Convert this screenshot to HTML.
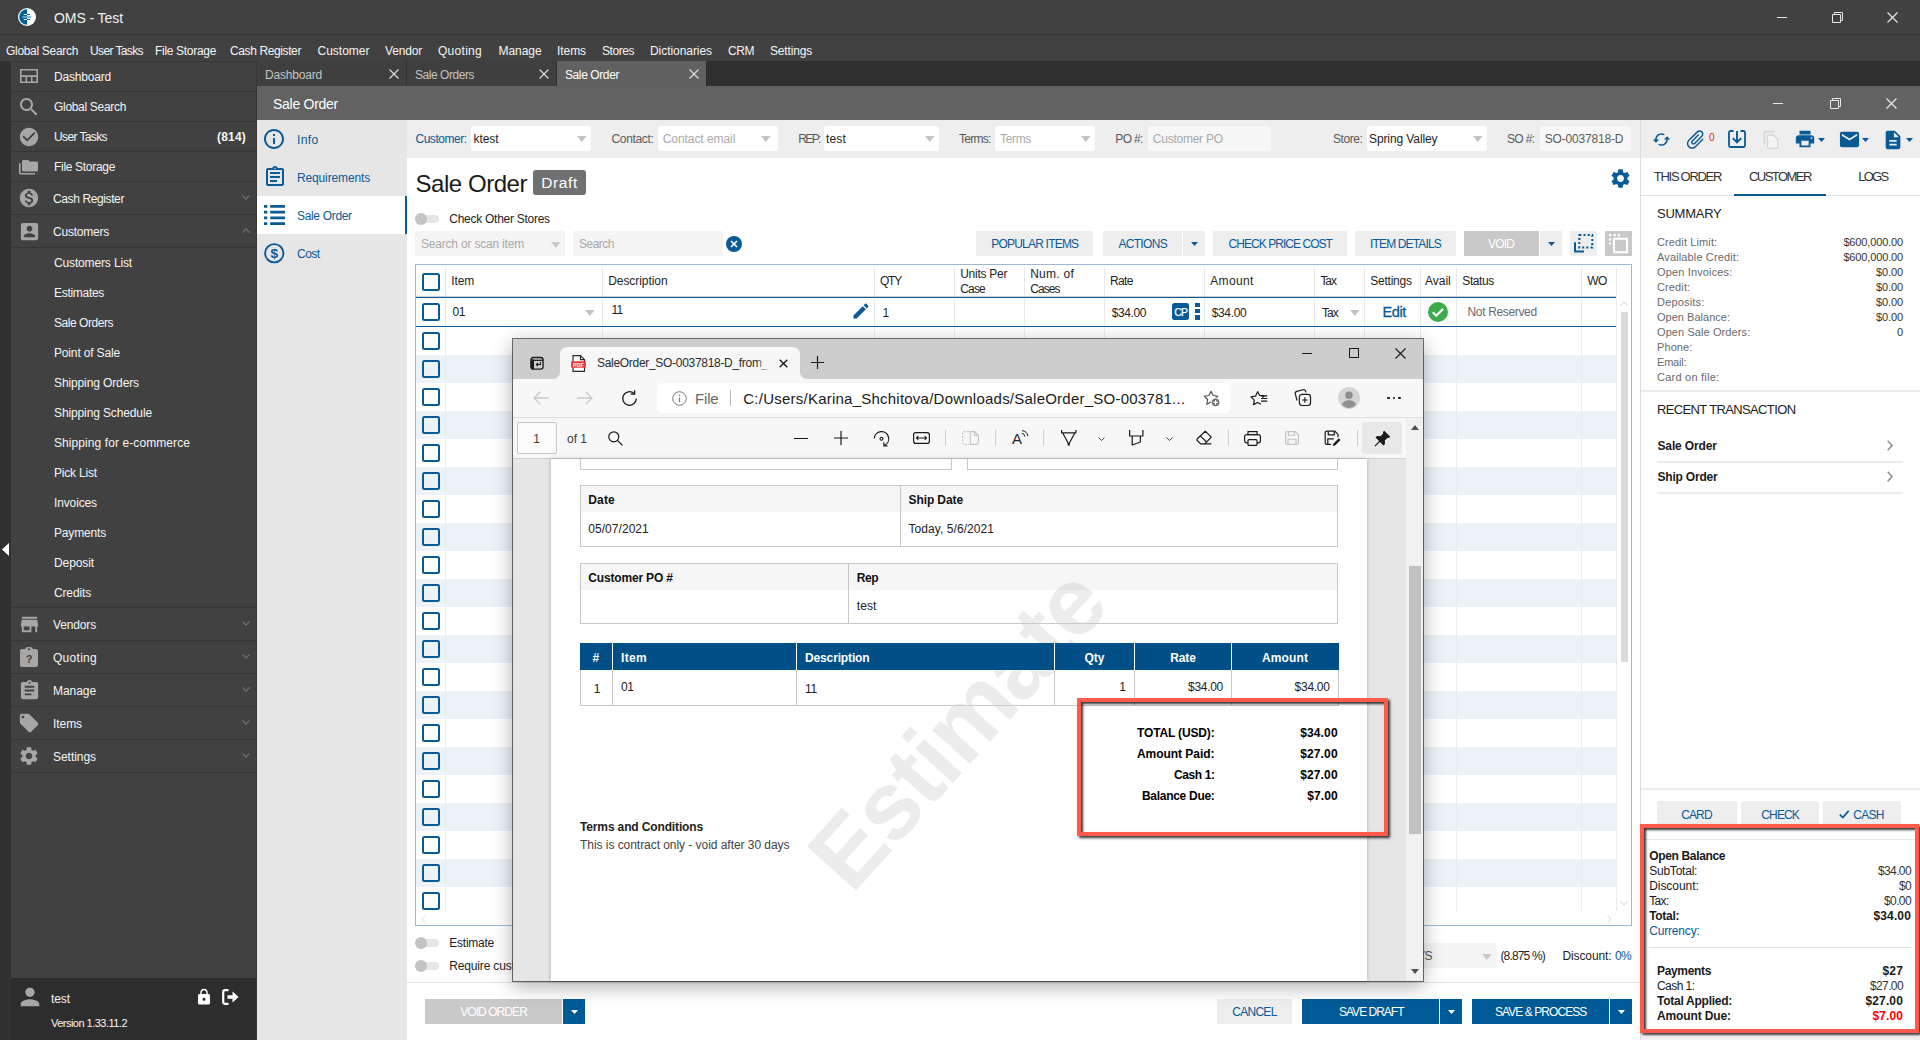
<!DOCTYPE html>
<html lang="en"><head><meta charset="utf-8"><title>OMS - Test</title>
<style>
html,body{margin:0;padding:0}
body{width:1920px;height:1040px;position:relative;overflow:hidden;background:#fff;font-family:"Liberation Sans",sans-serif;font-size:12px}
.a{position:absolute;box-sizing:border-box}
.t{position:absolute;white-space:nowrap;line-height:1}
svg{display:block;overflow:visible}
</style></head><body>
<header aria-label="Application chrome">
<div class="a" style="left:0px;top:0px;width:1920px;height:35px;background:#414141;"></div>
<div class="a" style="left:0px;top:34px;width:1920px;height:1px;background:#353535;"></div>
<svg class="a" style="left:18px;top:8px;" width="18" height="18" viewBox="0 0 18 18" preserveAspectRatio="none"><circle cx="9" cy="9" r="9" fill="#fff"/>
<path d="M9 1.200A7.800 7.800 0 0 0 9 16.800Z" fill="#00609c"/>
<path d="M5.800 6.500H9M5.800 11.500H9" stroke="#fff" stroke-width="1.100"/>
<path d="M9 6.500h3M9 11.500h3" stroke="#00609c" stroke-width="1.100"/>
<path d="M4.400 9H9" stroke="#a9cbe2" stroke-width="1.200"/>
<path d="M9 9h4.200" stroke="#3d86b8" stroke-width="1.200"/></svg>
<span class="t" style="letter-spacing:-0.077px;top:11.15px;font-size:14px;color:#f2f2f2;left:54px;">OMS - Test</span>
<div class="a" style="left:1777px;top:17px;width:10px;height:1px;background:#e8e8e8;"></div>
<svg class="a" style="left:1832px;top:12px;" width="11" height="11" viewBox="0 0 11 11" preserveAspectRatio="none"><path d="M.5 2.5h8v8h-8z M2.5 2.5v-2h8v8h-2" fill="none" stroke="#e8e8e8" stroke-width="1"/></svg>
<svg class="a" style="left:1887px;top:12px;" width="11" height="11" viewBox="0 0 11 11" preserveAspectRatio="none"><path d="M.5 .5l10 10M10.5 .5l-10 10" stroke="#e8e8e8" stroke-width="1.2"/></svg>
<div class="a" style="left:0px;top:35px;width:1920px;height:26px;background:#414141;"></div>
<span class="t" style="letter-spacing:-0.311px;top:44.84px;font-size:12px;color:#f5f5f5;left:6px;">Global Search</span>
<span class="t" style="letter-spacing:-0.614px;top:44.84px;font-size:12px;color:#f5f5f5;left:90px;">User Tasks</span>
<span class="t" style="letter-spacing:-0.309px;top:44.84px;font-size:12px;color:#f5f5f5;left:155px;">File Storage</span>
<span class="t" style="letter-spacing:-0.387px;top:44.84px;font-size:12px;color:#f5f5f5;left:230px;">Cash Register</span>
<span class="t" style="top:44.84px;font-size:12px;color:#f5f5f5;left:317.5px;">Customer</span>
<span class="t" style="letter-spacing:-0.174px;top:44.84px;font-size:12px;color:#f5f5f5;left:385px;">Vendor</span>
<span class="t" style="letter-spacing:0.281px;top:44.84px;font-size:12px;color:#f5f5f5;left:438px;">Quoting</span>
<span class="t" style="letter-spacing:-0.062px;top:44.84px;font-size:12px;color:#f5f5f5;left:498.5px;">Manage</span>
<span class="t" style="letter-spacing:-0.069px;top:44.84px;font-size:12px;color:#f5f5f5;left:557px;">Items</span>
<span class="t" style="letter-spacing:-0.448px;top:44.84px;font-size:12px;color:#f5f5f5;left:602px;">Stores</span>
<span class="t" style="letter-spacing:-0.059px;top:44.84px;font-size:12px;color:#f5f5f5;left:650px;">Dictionaries</span>
<span class="t" style="letter-spacing:-0.443px;top:44.84px;font-size:12px;color:#f5f5f5;left:728px;">CRM</span>
<span class="t" style="letter-spacing:-0.17px;top:44.84px;font-size:12px;color:#f5f5f5;left:770px;">Settings</span>
<div class="a" style="left:0px;top:61px;width:11px;height:979px;background:#313131;"></div>
<div class="a" style="left:0px;top:61px;width:257px;height:1px;background:#383838;"></div>
<svg class="a" style="left:2px;top:543px;" width="7" height="13" viewBox="0 0 7 13" preserveAspectRatio="none"><path d="M7 0v13L0 6.5z" fill="#fff"/></svg>
<div class="a" style="left:256px;top:61px;width:1664px;height:25px;background:#303030;"></div>
<div class="a" style="left:257px;top:61px;width:149px;height:25px;background:#3f3f3f;"></div>
<div class="a" style="left:407px;top:61px;width:149px;height:25px;background:#3f3f3f;"></div>
<div class="a" style="left:557px;top:61px;width:149px;height:25px;background:#616161;"></div>
<span class="t" style="letter-spacing:-0.191px;top:68.84px;font-size:12px;color:#c4c4c4;left:265px;">Dashboard</span>
<span class="t" style="letter-spacing:-0.457px;top:68.84px;font-size:12px;color:#c4c4c4;left:415px;">Sale Orders</span>
<span class="t" style="letter-spacing:-0.403px;top:68.84px;font-size:12px;color:#ffffff;left:565px;">Sale Order</span>
<svg class="a" style="left:389px;top:69px;" width="10" height="10" viewBox="0 0 10 10" preserveAspectRatio="none"><path d="M.5 .5l9 9M9.5 .5l-9 9" stroke="#e0e0e0" stroke-width="1.1"/></svg>
<svg class="a" style="left:539px;top:69px;" width="10" height="10" viewBox="0 0 10 10" preserveAspectRatio="none"><path d="M.5 .5l9 9M9.5 .5l-9 9" stroke="#e0e0e0" stroke-width="1.1"/></svg>
<svg class="a" style="left:689px;top:69px;" width="10" height="10" viewBox="0 0 10 10" preserveAspectRatio="none"><path d="M.5 .5l9 9M9.5 .5l-9 9" stroke="#e0e0e0" stroke-width="1.1"/></svg>
<div class="a" style="left:257px;top:86px;width:1663px;height:34px;background:#626262;"></div>
<span class="t" style="letter-spacing:-0.27px;top:97.15px;font-size:14px;color:#ffffff;left:273px;">Sale Order</span>
<div class="a" style="left:1773px;top:103px;width:10px;height:1px;background:#e8e8e8;"></div>
<svg class="a" style="left:1830px;top:98px;" width="11" height="11" viewBox="0 0 11 11" preserveAspectRatio="none"><path d="M.5 2.5h8v8h-8z M2.5 2.5v-2h8v8h-2" fill="none" stroke="#e8e8e8" stroke-width="1"/></svg>
<svg class="a" style="left:1886px;top:98px;" width="11" height="11" viewBox="0 0 11 11" preserveAspectRatio="none"><path d="M.5 .5l10 10M10.5 .5l-10 10" stroke="#e8e8e8" stroke-width="1.2"/></svg>
<div class="a" style="left:257px;top:120px;width:150px;height:920px;background:#e6e6e6;"></div>
<div class="a" style="left:257px;top:196px;width:150px;height:38px;background:#ffffff;"></div>
<div class="a" style="left:405px;top:196px;width:2px;height:38px;background:#0a5a96;"></div>
<span class="t" style="letter-spacing:0.371px;top:133.84px;font-size:12px;color:#0a5a96;left:297px;">Info</span>
<span class="t" style="letter-spacing:-0.142px;top:171.84px;font-size:12px;color:#0a5a96;left:297px;">Requirements</span>
<span class="t" style="letter-spacing:-0.323px;top:209.84px;font-size:12px;color:#0a5a96;left:297px;">Sale Order</span>
<span class="t" style="letter-spacing:-0.522px;top:247.84px;font-size:12px;color:#0a5a96;left:297px;">Cost</span>
<svg class="a" style="left:262.4px;top:127.4px;" width="24" height="24" viewBox="0 0 24 24" preserveAspectRatio="none"><path fill="#0a5a96" d="M11 7h2v2h-2zm0 4h2v6h-2zm1-9C6.48 2 2 6.48 2 12s4.48 10 10 10 10-4.48 10-10S17.52 2 12 2zm0 18c-4.41 0-8-3.59-8-8s3.59-8 8-8 8 3.59 8 8-3.59 8-8 8z"/></svg>
<svg class="a" style="left:262.5px;top:165px;" width="24" height="24" viewBox="0 0 24 24" preserveAspectRatio="none"><path fill="#0a5a96" d="M7 15h7v2H7zm0-4h10v2H7zm0-4h10v2H7zm12-4h-4.18C14.4 1.84 13.3 1 12 1c-1.3 0-2.4.84-2.82 2H5c-1.1 0-2 .9-2 2v14c0 1.1.9 2 2 2h14c1.1 0 2-.9 2-2V5c0-1.1-.9-2-2-2zm-7-.25c.41 0 .75.34.75.75s-.34.75-.75.75-.75-.34-.75-.75.34-.75.75-.75zM19 19H5V5h14v14z"/></svg>
<svg class="a" style="left:264px;top:205px;" width="21" height="20" viewBox="0 0 21 20" preserveAspectRatio="none"><path fill="#0a5a96" d="M0 0h3.300v2.800H0zM6.200 0h14.800v2.800H6.200zM0 5.750h3.300v2.800H0zM6.200 5.750h14.800v2.800H6.200zM0 11.450h3.300v2.800H0zM6.200 11.450h14.800v2.800H6.200zM0 17.200h3.300v2.800H0zM6.200 17.200h14.800v2.800H6.200z"/></svg>
<svg class="a" style="left:264.3px;top:242.8px;" width="20.5" height="20.5" viewBox="0 0 21 21" preserveAspectRatio="none"><circle cx="10.5" cy="10.5" r="9.4" fill="none" stroke="#0a5a96" stroke-width="1.9"/><text x="10.5" y="15.3" text-anchor="middle" font-family="Liberation Sans" font-size="14" font-weight="700" fill="#0a5a96">$</text></svg>
</header>
<nav aria-label="Main navigation">
<div class="a" style="left:11px;top:61px;width:245px;height:917px;background:#414141;"></div>
<div class="a" style="left:256px;top:61px;width:1px;height:979px;background:#363636;"></div>
<div class="a" style="left:0px;top:61px;width:257px;height:1px;background:#373737;"></div>
<div class="a" style="left:11px;top:91px;width:245px;height:1px;background:#363636;"></div>
<div class="a" style="left:11px;top:121px;width:245px;height:1px;background:#363636;"></div>
<div class="a" style="left:11px;top:151px;width:245px;height:1px;background:#363636;"></div>
<div class="a" style="left:11px;top:181px;width:245px;height:1px;background:#363636;"></div>
<div class="a" style="left:11px;top:214px;width:245px;height:1px;background:#363636;"></div>
<div class="a" style="left:11px;top:247px;width:245px;height:1px;background:#363636;"></div>
<div class="a" style="left:11px;top:607px;width:245px;height:1px;background:#363636;"></div>
<div class="a" style="left:11px;top:640px;width:245px;height:1px;background:#363636;"></div>
<div class="a" style="left:11px;top:673px;width:245px;height:1px;background:#363636;"></div>
<div class="a" style="left:11px;top:706px;width:245px;height:1px;background:#363636;"></div>
<div class="a" style="left:11px;top:739px;width:245px;height:1px;background:#363636;"></div>
<div class="a" style="left:11px;top:772px;width:245px;height:1px;background:#363636;"></div>
<span class="t" style="letter-spacing:-0.191px;top:70.84px;font-size:12px;color:#f5f5f5;left:54px;">Dashboard</span>
<span class="t" style="letter-spacing:-0.311px;top:100.84px;font-size:12px;color:#f5f5f5;left:54px;">Global Search</span>
<span class="t" style="letter-spacing:-0.614px;top:130.84px;font-size:12px;color:#f5f5f5;left:54px;">User Tasks</span>
<span class="t" style="letter-spacing:-0.309px;top:160.84px;font-size:12px;color:#f5f5f5;left:54px;">File Storage</span>
<span class="t" style="letter-spacing:0.197px;top:130.84px;font-size:12px;color:#f5f5f5;font-weight:700;right:1674px;">(814)</span>
<span class="t" style="letter-spacing:-0.387px;top:192.84px;font-size:12px;color:#f5f5f5;left:53px;">Cash Register</span>
<span class="t" style="letter-spacing:-0.224px;top:225.84px;font-size:12px;color:#f5f5f5;left:53px;">Customers</span>
<span class="t" style="letter-spacing:-0.15px;top:618.84px;font-size:12px;color:#f5f5f5;left:53px;">Vendors</span>
<span class="t" style="letter-spacing:0.281px;top:651.84px;font-size:12px;color:#f5f5f5;left:53px;">Quoting</span>
<span class="t" style="letter-spacing:-0.062px;top:684.84px;font-size:12px;color:#f5f5f5;left:53px;">Manage</span>
<span class="t" style="letter-spacing:-0.069px;top:717.84px;font-size:12px;color:#f5f5f5;left:53px;">Items</span>
<span class="t" style="letter-spacing:-0.045px;top:750.84px;font-size:12px;color:#f5f5f5;left:53px;">Settings</span>
<span class="t" style="letter-spacing:-0.145px;top:256.84px;font-size:12px;color:#f5f5f5;left:54px;">Customers List</span>
<span class="t" style="letter-spacing:-0.299px;top:286.84px;font-size:12px;color:#f5f5f5;left:54px;">Estimates</span>
<span class="t" style="letter-spacing:-0.457px;top:316.84px;font-size:12px;color:#f5f5f5;left:54px;">Sale Orders</span>
<span class="t" style="letter-spacing:-0.157px;top:346.84px;font-size:12px;color:#f5f5f5;left:54px;">Point of Sale</span>
<span class="t" style="letter-spacing:-0.115px;top:376.84px;font-size:12px;color:#f5f5f5;left:54px;">Shipping Orders</span>
<span class="t" style="letter-spacing:-0.122px;top:406.84px;font-size:12px;color:#f5f5f5;left:54px;">Shipping Schedule</span>
<span class="t" style="letter-spacing:0.084px;top:436.84px;font-size:12px;color:#f5f5f5;left:54px;">Shipping for e-commerce</span>
<span class="t" style="letter-spacing:-0.188px;top:466.84px;font-size:12px;color:#f5f5f5;left:54px;">Pick List</span>
<span class="t" style="letter-spacing:-0.129px;top:496.84px;font-size:12px;color:#f5f5f5;left:54px;">Invoices</span>
<span class="t" style="letter-spacing:-0.17px;top:526.84px;font-size:12px;color:#f5f5f5;left:54px;">Payments</span>
<span class="t" style="letter-spacing:-0.098px;top:556.84px;font-size:12px;color:#f5f5f5;left:54px;">Deposit</span>
<span class="t" style="letter-spacing:-0.145px;top:586.84px;font-size:12px;color:#f5f5f5;left:54px;">Credits</span>
<svg class="a" style="left:241.5px;top:195px;" width="8" height="5" viewBox="0 0 8 5" preserveAspectRatio="none"><path d="M.5 .5l3.5 3.5 3.5-3.5" fill="none" stroke="#6e6e6e" stroke-width="1.3"/></svg>
<svg class="a" style="left:241.5px;top:228px;" width="8" height="5" viewBox="0 0 8 5" preserveAspectRatio="none"><path d="M.5 4.5l3.5-3.5 3.5 3.5" fill="none" stroke="#6e6e6e" stroke-width="1.3"/></svg>
<svg class="a" style="left:241.5px;top:621px;" width="8" height="5" viewBox="0 0 8 5" preserveAspectRatio="none"><path d="M.5 .5l3.5 3.5 3.5-3.5" fill="none" stroke="#6e6e6e" stroke-width="1.3"/></svg>
<svg class="a" style="left:241.5px;top:654px;" width="8" height="5" viewBox="0 0 8 5" preserveAspectRatio="none"><path d="M.5 .5l3.5 3.5 3.5-3.5" fill="none" stroke="#6e6e6e" stroke-width="1.3"/></svg>
<svg class="a" style="left:241.5px;top:687px;" width="8" height="5" viewBox="0 0 8 5" preserveAspectRatio="none"><path d="M.5 .5l3.5 3.5 3.5-3.5" fill="none" stroke="#6e6e6e" stroke-width="1.3"/></svg>
<svg class="a" style="left:241.5px;top:720px;" width="8" height="5" viewBox="0 0 8 5" preserveAspectRatio="none"><path d="M.5 .5l3.5 3.5 3.5-3.5" fill="none" stroke="#6e6e6e" stroke-width="1.3"/></svg>
<svg class="a" style="left:241.5px;top:753px;" width="8" height="5" viewBox="0 0 8 5" preserveAspectRatio="none"><path d="M.5 .5l3.5 3.5 3.5-3.5" fill="none" stroke="#6e6e6e" stroke-width="1.3"/></svg>
<svg class="a" style="left:20px;top:69px;" width="18" height="14" viewBox="0 0 18 15" preserveAspectRatio="none"><path fill="#a6a6a6" fill-rule="evenodd" d="M0 0h18v15H0zM1.6 1.6v5.2h14.8V1.6zM1.6 8.6v4.8h3.9V8.6zM7 8.6v4.8h4V8.6zM12.5 8.6v4.8h3.9V8.6z"/></svg>
<svg class="a" style="left:16.5px;top:94.5px;" width="24" height="24" viewBox="0 0 24 24" preserveAspectRatio="none"><path fill="#a6a6a6" d="M15.5 14h-.79l-.28-.27C15.41 12.59 16 11.11 16 9.5 16 5.91 13.09 3 9.5 3S3 5.91 3 9.5 5.91 16 9.5 16c1.61 0 3.09-.59 4.23-1.57l.27.28v.79l5 4.99L20.49 19l-4.99-5zm-6 0C7.01 14 5 11.99 5 9.5S7.01 5 9.5 5 14 7.01 14 9.5 11.99 14 9.5 14z"/></svg>
<svg class="a" style="left:17.5px;top:125.5px;" width="22" height="22" viewBox="0 0 24 24" preserveAspectRatio="none"><path fill="#a6a6a6" d="M12 2C6.48 2 2 6.48 2 12s4.48 10 10 10 10-4.48 10-10S17.52 2 12 2zm-2 15l-5-5 1.41-1.41L10 14.17l7.59-7.59L19 8l-9 9z"/></svg>
<svg class="a" style="left:19px;top:160px;" width="19" height="14.5" viewBox="0 0 19 16" preserveAspectRatio="none"><path fill="#a6a6a6" d="M0 3.5h1.6v10.9h14.5V16H1.6C.7 16 0 15.3 0 14.4zM4.6 0h4.6l1.7 1.7h6.5c.9 0 1.6.7 1.6 1.6v7.900000000000001c0 .9-.7 1.6-1.6 1.6H4.6c-.9 0-1.6-.7-1.6-1.6V1.6C3 .7 3.700 0 4.6 0z"/></svg>
<svg class="a" style="left:18px;top:187px;" width="22" height="22" viewBox="0 0 24 24" preserveAspectRatio="none"><path fill="#a6a6a6" d="M12 2C6.48 2 2 6.48 2 12s4.48 10 10 10 10-4.48 10-10S17.52 2 12 2zm1.41 16.090V20h-2.670v-1.930c-1.710-.360-3.160-1.460-3.270-3.400h1.960c.1 1.050.820 1.870 2.650 1.870 1.960 0 2.400-.980 2.400-1.590 0-.830-.440-1.610-2.670-2.140-2.480-.600-4.180-1.620-4.180-3.670 0-1.720 1.390-2.840 3.110-3.210V4h2.670v1.950c1.860.45 2.790 1.860 2.850 3.390H14.300c-.050-1.110-.640-1.870-2.220-1.870-1.500 0-2.400.680-2.400 1.640 0 .840.650 1.390 2.670 1.910s4.180 1.390 4.180 3.910c-.010 1.830-1.380 2.830-3.120 3.160z"/></svg>
<svg class="a" style="left:17.5px;top:220px;" width="23" height="23" viewBox="0 0 24 24" preserveAspectRatio="none"><path fill="#a6a6a6" d="M3 5v14c0 1.100.890 2 2 2h14c1.100 0 2-.900 2-2V5c0-1.100-.900-2-2-2H5c-1.110 0-2 .900-2 2zm12 4c0 1.660-1.340 3-3 3s-3-1.340-3-3 1.340-3 3-3 3 1.340 3 3zm-9 8c0-2 4-3.100 6-3.100s6 1.100 6 3.100v1H6v-1z"/></svg>
<svg class="a" style="left:18px;top:612.5px;" width="23" height="23" viewBox="0 0 24 24" preserveAspectRatio="none"><path fill="#a6a6a6" d="M20 4H4v2h16V4zm1 10v-2l-1-5H4l-1 5v2h1v6h10v-6h4v6h2v-6h1zm-9 4H6v-4h6v4z"/></svg>
<svg class="a" style="left:20px;top:647px;" width="18" height="20" viewBox="0 0 18 20" preserveAspectRatio="none"><path fill="#a6a6a6" d="M16 2h-3.200C12.400.840 11.300 0 10 0h-2C6.700 0 5.600.840 5.200 2H2C.900 2 0 2.900 0 4v14c0 1.100.900 2 2 2h14c1.100 0 2-.900 2-2V4c0-1.100-.900-2-2-2zM9 1.200c.550 0 1 .450 1 1s-.450 1-1 1-1-.450-1-1 .450-1 1-1z"/><text x="9" y="16" text-anchor="middle" font-family="Liberation Sans" font-size="11" font-weight="700" fill="#414141">?</text></svg>
<svg class="a" style="left:17.5px;top:678.5px;" width="23" height="23" viewBox="0 0 24 24" preserveAspectRatio="none"><path fill="#a6a6a6" d="M19 3h-4.180C14.400 1.840 13.300 1 12 1c-1.300 0-2.400.840-2.820 2H5c-1.100 0-2 .900-2 2v14c0 1.100.900 2 2 2h14c1.100 0 2-.900 2-2V5c0-1.100-.900-2-2-2zm-7 0c.550 0 1 .450 1 1s-.450 1-1 1-1-.450-1-1 .450-1 1-1zm2 14H7v-2h7v2zm3-4H7v-2h10v2zm0-4H7V7h10v2z"/></svg>
<svg class="a" style="left:18px;top:712px;" width="22" height="22" viewBox="0 0 24 24" preserveAspectRatio="none"><path fill="#a6a6a6" d="M21.410 11.580l-9-9C12.050 2.220 11.550 2 11 2H4c-1.100 0-2 .900-2 2v7c0 .550.220 1.050.590 1.420l9 9c.360.360.860.580 1.410.580.550 0 1.050-.220 1.410-.590l7-7c.370-.360.590-.860.590-1.410 0-.550-.230-1.060-.590-1.420zM5.500 7C4.670 7 4 6.330 4 5.500S4.670 4 5.500 4 7 4.670 7 5.500 6.330 7 5.500 7z"/></svg>
<svg class="a" style="left:18px;top:745px;" width="22" height="22" viewBox="0 0 24 24" preserveAspectRatio="none"><path fill="#a6a6a6" d="M19.140,12.940c0.040-0.300,0.060-0.610,0.060-0.940c0-0.320-0.020-0.640-0.070-0.940l2.030-1.580c0.180-0.140,0.230-0.410,0.120-0.610 l-1.920-3.320c-0.120-0.220-0.370-0.290-0.590-0.220l-2.390,0.960c-0.500-0.380-1.030-0.700-1.620-0.940L14.400,2.810c-0.040-0.240-0.240-0.410-0.480-0.410 h-3.840c-0.240,0-0.430,0.170-0.470,0.410L9.250,5.350C8.660,5.590,8.120,5.920,7.630,6.290L5.240,5.330c-0.220-0.080-0.470,0-0.590,0.220L2.740,8.870 C2.620,9.080,2.660,9.340,2.860,9.480l2.030,1.580C4.840,11.360,4.800,11.690,4.800,12s0.020,0.640,0.070,0.940l-2.030,1.580 c-0.180,0.140-0.230,0.410-0.120,0.610l1.920,3.320c0.120,0.220,0.370,0.290,0.590,0.220l2.390-0.960c0.500,0.380,1.030,0.700,1.620,0.940l0.360,2.540 c0.050,0.240,0.240,0.410,0.480,0.410h3.840c0.240,0,0.440-0.170,0.470-0.410l0.360-2.540c0.590-0.240,1.130-0.560,1.620-0.940l2.390,0.960 c0.220,0.080,0.470,0,0.590-0.220l1.920-3.320c0.120-0.220,0.070-0.470-0.120-0.610L19.140,12.940z M12,15.600c-1.980,0-3.600-1.620-3.600-3.600 s1.620-3.600,3.600-3.600s3.600,1.620,3.600,3.600S13.980,15.600,12,15.600z"/></svg>
<div class="a" style="left:11px;top:978px;width:245px;height:62px;background:#2d2d2d;"></div>
<svg class="a" style="left:16px;top:983px;" width="28" height="28" viewBox="0 0 24 24" preserveAspectRatio="none"><path fill="#a6a6a6" d="M12 12c2.210 0 4-1.790 4-4s-1.790-4-4-4-4 1.790-4 4 1.790 4 4 4zm0 2c-2.670 0-8 1.340-8 4v2h16v-2c0-2.660-5.330-4-8-4z"/></svg>
<span class="t" style="letter-spacing:-0.086px;top:992.84px;font-size:12px;color:#f5f5f5;left:51px;">test</span>
<span class="t" style="letter-spacing:-0.518px;top:1017.69px;font-size:11px;color:#f5f5f5;left:51px;">Version 1.33.11.2</span>
<svg class="a" style="left:194.5px;top:988px;" width="18" height="18" viewBox="0 0 24 24" preserveAspectRatio="none"><path fill="#ffffff" d="M18 8h-1V6c0-2.760-2.240-5-5-5S7 3.240 7 6v2H6c-1.100 0-2 .900-2 2v10c0 1.100.900 2 2 2h12c1.100 0 2-.900 2-2V10c0-1.100-.900-2-2-2zm-6 9c-1.100 0-2-.900-2-2s.900-2 2-2 2 .900 2 2-.900 2-2 2zm3.100-9H8.900V6c0-1.710 1.390-3.100 3.100-3.100 1.710 0 3.100 1.390 3.100 3.100v2z"/></svg>
<svg class="a" style="left:222px;top:989px;" width="17" height="16" viewBox="0 0 17 16" preserveAspectRatio="none"><path d="M6.500 1.200H3.200c-1.100 0-2 .900-2 2v9.600c0 1.100.900 2 2 2h3.300" fill="none" stroke="#fff" stroke-width="2.200"/><path d="M5.500 6.200h5V2.600L16.600 8l-6.100 5.400V9.800h-5z" fill="#fff"/></svg>
</nav>
<main aria-label="Sale Order">
<div class="a" style="left:407px;top:120px;width:1513px;height:38px;background:#eeeeee;"></div>
<div class="a" style="left:1640px;top:120px;width:1px;height:920px;background:#dcdcdc;"></div>
<div class="a" style="left:471px;top:126px;width:120px;height:25px;background:#fff;border-radius:3px;"></div>
<div class="a" style="left:658px;top:126px;width:120px;height:25px;background:#fff;border-radius:3px;"></div>
<div class="a" style="left:824px;top:126px;width:115px;height:25px;background:#fff;border-radius:3px;"></div>
<div class="a" style="left:995px;top:126px;width:100px;height:25px;background:#fff;border-radius:3px;"></div>
<div class="a" style="left:1148px;top:126px;width:123px;height:25px;background:#f7f7f7;border-radius:3px;"></div>
<div class="a" style="left:1367px;top:126px;width:120px;height:25px;background:#fff;border-radius:3px;"></div>
<div class="a" style="left:1540px;top:126px;width:91px;height:25px;background:#f7f7f7;border-radius:3px;"></div>
<span class="t" style="letter-spacing:-0.484px;top:132.84px;font-size:12px;color:#0a5a96;left:415.5px;">Customer:</span>
<span class="t" style="letter-spacing:-0.069px;top:132.84px;font-size:12px;color:#1e1e1e;left:473.5px;">ktest</span>
<span class="t" style="letter-spacing:-0.338px;top:132.84px;font-size:12px;color:#5a5a5a;left:611.5px;">Contact:</span>
<span class="t" style="letter-spacing:-0.06px;top:132.84px;font-size:12px;color:#a9a9a9;left:662.7px;">Contact email</span>
<span class="t" style="letter-spacing:-1.629px;top:132.84px;font-size:12px;color:#5a5a5a;left:798.3px;">REP:</span>
<span class="t" style="letter-spacing:0.164px;top:132.84px;font-size:12px;color:#1e1e1e;left:826px;">test</span>
<span class="t" style="letter-spacing:-0.75px;top:132.84px;font-size:12px;color:#5a5a5a;left:959px;">Terms:</span>
<span class="t" style="letter-spacing:-0.334px;top:132.84px;font-size:12px;color:#a9a9a9;left:1000px;">Terms</span>
<span class="t" style="letter-spacing:-0.637px;top:132.84px;font-size:12px;color:#5a5a5a;left:1115.3px;">PO #:</span>
<span class="t" style="letter-spacing:-0.244px;top:132.84px;font-size:12px;color:#a9a9a9;left:1152.8px;">Customer PO</span>
<span class="t" style="letter-spacing:-0.419px;top:132.84px;font-size:12px;color:#5a5a5a;left:1333px;">Store:</span>
<span class="t" style="letter-spacing:-0.102px;top:132.84px;font-size:12px;color:#1e1e1e;left:1369px;">Spring Valley</span>
<span class="t" style="letter-spacing:-0.637px;top:132.84px;font-size:12px;color:#5a5a5a;left:1507px;">SO #:</span>
<span class="t" style="letter-spacing:-0.177px;top:132.84px;font-size:12px;color:#5a5a5a;left:1544.7px;">SO-0037818-D</span>
<svg class="a" style="left:577.4px;top:136.3px;" width="9.6" height="6" viewBox="0 0 10 6" preserveAspectRatio="none"><path d="M0 0h10L5 6z" fill="#c2c2c2"/></svg>
<svg class="a" style="left:760.6px;top:136.3px;" width="9.6" height="6" viewBox="0 0 10 6" preserveAspectRatio="none"><path d="M0 0h10L5 6z" fill="#c2c2c2"/></svg>
<svg class="a" style="left:925.4px;top:136.3px;" width="9.6" height="6" viewBox="0 0 10 6" preserveAspectRatio="none"><path d="M0 0h10L5 6z" fill="#c2c2c2"/></svg>
<svg class="a" style="left:1081.2px;top:136.3px;" width="9.6" height="6" viewBox="0 0 10 6" preserveAspectRatio="none"><path d="M0 0h10L5 6z" fill="#c2c2c2"/></svg>
<svg class="a" style="left:1473.2px;top:136.3px;" width="9.6" height="6" viewBox="0 0 10 6" preserveAspectRatio="none"><path d="M0 0h10L5 6z" fill="#c2c2c2"/></svg>
<span class="t" style="letter-spacing:-0.456px;top:171.68px;font-size:24px;color:#1a1a1a;left:415.5px;">Sale Order</span>
<div class="a" style="left:533px;top:170px;width:53px;height:25px;background:#707070;border-radius:3px;"></div>
<span class="t" style="letter-spacing:0.581px;top:174.88px;font-size:15.5px;color:#ffffff;left:541.3px;">Draft</span>
<svg class="a" style="left:1608.5px;top:166.5px;" width="23" height="23" viewBox="0 0 24 24" preserveAspectRatio="none"><path fill="#0a5a96" d="M19.14,12.94c0.04-0.3,0.06-0.61,0.06-0.94c0-0.32-0.02-0.64-0.07-0.94l2.03-1.58c0.18-0.14,0.23-0.41,0.12-0.61 l-1.92-3.32c-0.12-0.22-0.37-0.29-0.59-0.22l-2.39,0.96c-0.5-0.38-1.03-0.7-1.62-0.94L14.4,2.81c-0.04-0.24-0.24-0.41-0.48-0.41 h-3.84c-0.24,0-0.43,0.17-0.47,0.41L9.25,5.35C8.66,5.59,8.12,5.92,7.63,6.29L5.24,5.33c-0.22-0.08-0.47,0-0.59,0.22L2.74,8.87 C2.62,9.08,2.66,9.34,2.86,9.48l2.03,1.58C4.84,11.36,4.8,11.69,4.8,12s0.02,0.64,0.07,0.94l-2.03,1.58 c-0.18,0.14-0.23,0.41-0.12,0.61l1.92,3.32c0.12,0.22,0.37,0.29,0.59,0.22l2.39-0.96c0.5,0.38,1.03,0.7,1.62,0.94l0.36,2.54 c0.05,0.24,0.24,0.41,0.48,0.41h3.84c0.24,0,0.44-0.17,0.47-0.41l0.36-2.54c0.59-0.24,1.13-0.56,1.62-0.94l2.39,0.96 c0.22,0.08,0.47,0,0.59-0.22l1.92-3.32c0.12-0.22,0.07-0.47-0.12-0.61L19.14,12.94z M12,15.6c-1.98,0-3.6-1.62-3.6-3.6 s1.62-3.6,3.6-3.6s3.6,1.62,3.6,3.6S13.98,15.6,12,15.600z"/></svg>
<div class="a" style="left:419px;top:214.5px;width:20px;height:8px;background:#e6e6e6;border-radius:4px;"></div>
<div class="a" style="left:415px;top:212.5px;width:12px;height:12px;background:#c3c3c3;border-radius:6px;"></div>
<span class="t" style="letter-spacing:-0.271px;top:212.84px;font-size:12px;color:#1e1e1e;left:449.3px;">Check Other Stores</span>
<div class="a" style="left:415px;top:231px;width:150px;height:24.5px;background:#f4f4f4;border-radius:2px;"></div>
<div class="a" style="left:573px;top:231px;width:150px;height:24.5px;background:#f4f4f4;border-radius:2px;"></div>
<span class="t" style="letter-spacing:-0.196px;top:237.84px;font-size:12px;color:#a9a9a9;left:421px;">Search or scan item</span>
<span class="t" style="letter-spacing:-0.505px;top:237.84px;font-size:12px;color:#a9a9a9;left:579px;">Search</span>
<svg class="a" style="left:550.7px;top:241.5px;" width="9.6" height="6" viewBox="0 0 10 6" preserveAspectRatio="none"><path d="M0 0h10L5 6z" fill="#c9c9c9"/></svg>
<svg class="a" style="left:726px;top:235.5px;" width="16" height="16" viewBox="0 0 16 16" preserveAspectRatio="none"><circle cx="8" cy="8" r="8" fill="#0a5a96"/><path d="M5 5l6 6M11 5l-6 6" stroke="#fff" stroke-width="1.7"/></svg>
<div class="a" style="left:976px;top:231px;width:116.7px;height:24.5px;background:#eeeeee;"></div>
<span class="t" style="letter-spacing:-0.797px;top:237.84px;font-size:12px;color:#0a5a96;left:991.3px;">POPULAR ITEMS</span>
<div class="a" style="left:1102.8px;top:231px;width:78.8px;height:24.5px;background:#eeeeee;"></div>
<span class="t" style="letter-spacing:-0.678px;top:237.84px;font-size:12px;color:#0a5a96;left:1118.4px;">ACTIONS</span>
<div class="a" style="left:1183px;top:231px;width:22px;height:24.5px;background:#eeeeee;"></div>
<svg class="a" style="left:1190.5px;top:242.3px;" width="7" height="4" viewBox="0 0 10 6" preserveAspectRatio="none"><path d="M0 0h10L5 6z" fill="#0a5a96"/></svg>
<div class="a" style="left:1213px;top:231px;width:134px;height:24.5px;background:#eeeeee;"></div>
<span class="t" style="letter-spacing:-0.949px;top:237.84px;font-size:12px;color:#0a5a96;left:1228.5px;">CHECK PRICE COST</span>
<div class="a" style="left:1355px;top:231px;width:100.8px;height:24.5px;background:#eeeeee;"></div>
<span class="t" style="letter-spacing:-0.844px;top:237.84px;font-size:12px;color:#0a5a96;left:1370px;">ITEM DETAILS</span>
<div class="a" style="left:1464px;top:231px;width:74.7px;height:24.5px;background:#c9c9c9;"></div>
<span class="t" style="letter-spacing:-0.836px;top:237.84px;font-size:12px;color:#ffffff;left:1488px;">VOID</span>
<div class="a" style="left:1540.4px;top:231px;width:21.4px;height:24.5px;background:#eeeeee;"></div>
<svg class="a" style="left:1547.5px;top:242.3px;" width="7" height="4" viewBox="0 0 10 6" preserveAspectRatio="none"><path d="M0 0h10L5 6z" fill="#0a5a96"/></svg>
<div class="a" style="left:1570px;top:231px;width:27px;height:24.5px;background:#eeeeee;"></div>
<svg class="a" style="left:1574.3px;top:234.2px;" width="19" height="19" viewBox="0 0 19 19" preserveAspectRatio="none"><path d="M5.300 1.100h13v12.500h-13z" fill="none" stroke="#0a5a96" stroke-width="2" stroke-dasharray="2.100 2.100"/><path d="M1 8.300v9.300h9" fill="none" stroke="#0a5a96" stroke-width="2"/></svg>
<div class="a" style="left:1605px;top:231px;width:27px;height:24.5px;background:#c9c9c9;"></div>
<svg class="a" style="left:1609px;top:234px;" width="20" height="20" viewBox="0 0 20 20" preserveAspectRatio="none"><path d="M0 0h2.200v2.200H0zM4.500 0h2.200v2.200H4.500zM8.700 0h2.200v2.200H8.700zM0 4.200h2.200v2.200H0zM0 8.400h2.200v2.200H0z" fill="#fff"/><path d="M5 4.800h13v13.500H5z" fill="none" stroke="#fff" stroke-width="2"/></svg>
<div class="a" style="left:416px;top:355px;width:1200px;height:28px;background:#ebf3f7;"></div>
<div class="a" style="left:416px;top:411px;width:1200px;height:28px;background:#ebf3f7;"></div>
<div class="a" style="left:416px;top:467px;width:1200px;height:28px;background:#ebf3f7;"></div>
<div class="a" style="left:416px;top:523px;width:1200px;height:28px;background:#ebf3f7;"></div>
<div class="a" style="left:416px;top:579px;width:1200px;height:28px;background:#ebf3f7;"></div>
<div class="a" style="left:416px;top:635px;width:1200px;height:28px;background:#ebf3f7;"></div>
<div class="a" style="left:416px;top:691px;width:1200px;height:28px;background:#ebf3f7;"></div>
<div class="a" style="left:416px;top:747px;width:1200px;height:28px;background:#ebf3f7;"></div>
<div class="a" style="left:416px;top:803px;width:1200px;height:28px;background:#ebf3f7;"></div>
<div class="a" style="left:416px;top:859px;width:1200px;height:28px;background:#ebf3f7;"></div>
<div class="a" style="left:445px;top:265px;width:1px;height:646px;background:#eaedf0;"></div>
<div class="a" style="left:602px;top:265px;width:1px;height:646px;background:#eaedf0;"></div>
<div class="a" style="left:874px;top:265px;width:1px;height:646px;background:#eaedf0;"></div>
<div class="a" style="left:954px;top:265px;width:1px;height:646px;background:#eaedf0;"></div>
<div class="a" style="left:1024px;top:265px;width:1px;height:646px;background:#eaedf0;"></div>
<div class="a" style="left:1104px;top:265px;width:1px;height:646px;background:#eaedf0;"></div>
<div class="a" style="left:1204px;top:265px;width:1px;height:646px;background:#eaedf0;"></div>
<div class="a" style="left:1314px;top:265px;width:1px;height:646px;background:#eaedf0;"></div>
<div class="a" style="left:1364px;top:265px;width:1px;height:646px;background:#eaedf0;"></div>
<div class="a" style="left:1420px;top:265px;width:1px;height:646px;background:#eaedf0;"></div>
<div class="a" style="left:1456px;top:265px;width:1px;height:646px;background:#eaedf0;"></div>
<div class="a" style="left:1581px;top:265px;width:1px;height:646px;background:#eaedf0;"></div>
<div class="a" style="left:1616px;top:265px;width:1px;height:646px;background:#eaedf0;"></div>
<div class="a" style="left:416px;top:265px;width:1216px;height:31px;background:#ffffff;"></div>
<div class="a" style="left:445px;top:268px;width:1px;height:28px;background:#e9e9e9;"></div>
<div class="a" style="left:602px;top:268px;width:1px;height:28px;background:#e9e9e9;"></div>
<div class="a" style="left:874px;top:268px;width:1px;height:28px;background:#e9e9e9;"></div>
<div class="a" style="left:954px;top:268px;width:1px;height:28px;background:#e9e9e9;"></div>
<div class="a" style="left:1024px;top:268px;width:1px;height:28px;background:#e9e9e9;"></div>
<div class="a" style="left:1104px;top:268px;width:1px;height:28px;background:#e9e9e9;"></div>
<div class="a" style="left:1204px;top:268px;width:1px;height:28px;background:#e9e9e9;"></div>
<div class="a" style="left:1314px;top:268px;width:1px;height:28px;background:#e9e9e9;"></div>
<div class="a" style="left:1364px;top:268px;width:1px;height:28px;background:#e9e9e9;"></div>
<div class="a" style="left:1420px;top:268px;width:1px;height:28px;background:#e9e9e9;"></div>
<div class="a" style="left:1456px;top:268px;width:1px;height:28px;background:#e9e9e9;"></div>
<div class="a" style="left:1581px;top:268px;width:1px;height:28px;background:#e9e9e9;"></div>
<div class="a" style="left:1616px;top:268px;width:1px;height:28px;background:#e9e9e9;"></div>
<div class="a" style="left:416px;top:296px;width:1200px;height:1px;background:#d0d0d0;"></div>
<div class="a" style="left:415px;top:264px;width:1217px;height:662px;border:1px solid #9db8d2;"></div>
<div class="a" style="left:416px;top:297px;width:1200px;height:30px;background:#fff;"></div>
<div class="a" style="left:416px;top:296.5px;width:1200px;height:1.5px;background:#0a5a96;"></div>
<div class="a" style="left:416px;top:325.5px;width:1200px;height:1.5px;background:#0a5a96;"></div>
<div class="a" style="left:445px;top:299px;width:1px;height:26px;background:#e6eaee;"></div>
<div class="a" style="left:602px;top:299px;width:1px;height:26px;background:#e6eaee;"></div>
<div class="a" style="left:874px;top:299px;width:1px;height:26px;background:#e6eaee;"></div>
<div class="a" style="left:954px;top:299px;width:1px;height:26px;background:#e6eaee;"></div>
<div class="a" style="left:1024px;top:299px;width:1px;height:26px;background:#e6eaee;"></div>
<div class="a" style="left:1104px;top:299px;width:1px;height:26px;background:#e6eaee;"></div>
<div class="a" style="left:1204px;top:299px;width:1px;height:26px;background:#e6eaee;"></div>
<div class="a" style="left:1314px;top:299px;width:1px;height:26px;background:#e6eaee;"></div>
<div class="a" style="left:1364px;top:299px;width:1px;height:26px;background:#e6eaee;"></div>
<div class="a" style="left:1420px;top:299px;width:1px;height:26px;background:#e6eaee;"></div>
<div class="a" style="left:1456px;top:299px;width:1px;height:26px;background:#e6eaee;"></div>
<div class="a" style="left:1581px;top:299px;width:1px;height:26px;background:#e6eaee;"></div>
<span class="t" style="letter-spacing:-0.086px;top:274.84px;font-size:12px;color:#1e1e1e;left:451.2px;">Item</span>
<span class="t" style="letter-spacing:-0.057px;top:274.84px;font-size:12px;color:#1e1e1e;left:608.2px;">Description</span>
<span class="t" style="letter-spacing:-1.224px;top:274.84px;font-size:12px;color:#1e1e1e;left:880px;">QTY</span>
<span class="t" style="letter-spacing:-0.64px;top:274.84px;font-size:12px;color:#1e1e1e;left:1110px;">Rate</span>
<span class="t" style="letter-spacing:0.357px;top:274.84px;font-size:12px;color:#1e1e1e;left:1210.2px;">Amount</span>
<span class="t" style="letter-spacing:-1.029px;top:274.84px;font-size:12px;color:#1e1e1e;left:1320.4px;">Tax</span>
<span class="t" style="letter-spacing:-0.22px;top:274.84px;font-size:12px;color:#1e1e1e;left:1370.2px;">Settings</span>
<span class="t" style="letter-spacing:-0.019px;top:274.84px;font-size:12px;color:#1e1e1e;left:1425px;">Avail</span>
<span class="t" style="letter-spacing:-0.422px;top:274.84px;font-size:12px;color:#1e1e1e;left:1462.3px;">Status</span>
<span class="t" style="letter-spacing:-0.636px;top:274.84px;font-size:12px;color:#1e1e1e;left:1587.3px;">WO</span>
<span class="t" style="letter-spacing:-0.262px;top:267.84px;font-size:12px;color:#1e1e1e;left:960.2px;">Units Per</span>
<span class="t" style="letter-spacing:-0.804px;top:282.84px;font-size:12px;color:#1e1e1e;left:960.2px;">Case</span>
<span class="t" style="letter-spacing:0.255px;top:267.84px;font-size:12px;color:#1e1e1e;left:1030.2px;">Num. of</span>
<span class="t" style="letter-spacing:-0.943px;top:282.84px;font-size:12px;color:#1e1e1e;left:1030.2px;">Cases</span>
<div class="a" style="left:422px;top:272.5px;width:18px;height:18px;border:2px solid #0a5a96;border-radius:2.5px;"></div>
<div class="a" style="left:422px;top:303px;width:18px;height:18px;border:2px solid #0a5a96;border-radius:2.5px;"></div>
<div class="a" style="left:422px;top:332px;width:18px;height:18px;border:2px solid #0a5a96;border-radius:2.5px;"></div>
<div class="a" style="left:422px;top:360px;width:18px;height:18px;border:2px solid #0a5a96;border-radius:2.5px;"></div>
<div class="a" style="left:422px;top:388px;width:18px;height:18px;border:2px solid #0a5a96;border-radius:2.5px;"></div>
<div class="a" style="left:422px;top:416px;width:18px;height:18px;border:2px solid #0a5a96;border-radius:2.5px;"></div>
<div class="a" style="left:422px;top:444px;width:18px;height:18px;border:2px solid #0a5a96;border-radius:2.5px;"></div>
<div class="a" style="left:422px;top:472px;width:18px;height:18px;border:2px solid #0a5a96;border-radius:2.5px;"></div>
<div class="a" style="left:422px;top:500px;width:18px;height:18px;border:2px solid #0a5a96;border-radius:2.5px;"></div>
<div class="a" style="left:422px;top:528px;width:18px;height:18px;border:2px solid #0a5a96;border-radius:2.5px;"></div>
<div class="a" style="left:422px;top:556px;width:18px;height:18px;border:2px solid #0a5a96;border-radius:2.5px;"></div>
<div class="a" style="left:422px;top:584px;width:18px;height:18px;border:2px solid #0a5a96;border-radius:2.5px;"></div>
<div class="a" style="left:422px;top:612px;width:18px;height:18px;border:2px solid #0a5a96;border-radius:2.5px;"></div>
<div class="a" style="left:422px;top:640px;width:18px;height:18px;border:2px solid #0a5a96;border-radius:2.5px;"></div>
<div class="a" style="left:422px;top:668px;width:18px;height:18px;border:2px solid #0a5a96;border-radius:2.5px;"></div>
<div class="a" style="left:422px;top:696px;width:18px;height:18px;border:2px solid #0a5a96;border-radius:2.5px;"></div>
<div class="a" style="left:422px;top:724px;width:18px;height:18px;border:2px solid #0a5a96;border-radius:2.5px;"></div>
<div class="a" style="left:422px;top:752px;width:18px;height:18px;border:2px solid #0a5a96;border-radius:2.5px;"></div>
<div class="a" style="left:422px;top:780px;width:18px;height:18px;border:2px solid #0a5a96;border-radius:2.5px;"></div>
<div class="a" style="left:422px;top:808px;width:18px;height:18px;border:2px solid #0a5a96;border-radius:2.5px;"></div>
<div class="a" style="left:422px;top:836px;width:18px;height:18px;border:2px solid #0a5a96;border-radius:2.5px;"></div>
<div class="a" style="left:422px;top:864px;width:18px;height:18px;border:2px solid #0a5a96;border-radius:2.5px;"></div>
<div class="a" style="left:422px;top:892px;width:18px;height:18px;border:2px solid #0a5a96;border-radius:2.5px;"></div>
<span class="t" style="letter-spacing:-0.53px;top:305.84px;font-size:12px;color:#1e1e1e;left:452.6px;">01</span>
<svg class="a" style="left:585.0px;top:309.8px;" width="9.6" height="6" viewBox="0 0 10 6" preserveAspectRatio="none"><path d="M0 0h10L5 6z" fill="#c2c2c2"/></svg>
<span class="t" style="letter-spacing:-0.734px;top:303.84px;font-size:12px;color:#1e1e1e;left:611.5px;">11</span>
<svg class="a" style="left:851px;top:300.5px;" width="20" height="20" viewBox="0 0 24 24" preserveAspectRatio="none"><path fill="#0a5a96" d="M3 17.250V21h3.750L17.810 9.940l-3.750-3.750L3 17.250zM20.710 7.040c.390-.390.390-1.020 0-1.410l-2.340-2.340c-.390-.390-1.020-.390-1.410 0l-1.830 1.830 3.750 3.750 1.830-1.830z"/></svg>
<span class="t" style="top:306.84px;font-size:12px;color:#1e1e1e;left:882.4px;">1</span>
<span class="t" style="letter-spacing:-0.401px;top:306.84px;font-size:12px;color:#1e1e1e;left:1111.7px;">$34.00</span>
<div class="a" style="left:1172px;top:303px;width:17px;height:17px;background:#0a5a96;border-radius:2.5px;"></div>
<span class="t" style="letter-spacing:-0.897px;top:306.71px;font-size:10.5px;color:#fff;left:1180.6px;transform:translateX(-50%);-webkit-text-stroke:0.25px #fff;">CP</span>
<div class="a" style="left:1195.2px;top:302.6px;width:5px;height:4.6px;background:#0a5a96;"></div>
<div class="a" style="left:1195.2px;top:308.8px;width:5px;height:4.6px;background:#0a5a96;"></div>
<div class="a" style="left:1195.2px;top:315.3px;width:5px;height:4.6px;background:#0a5a96;"></div>
<span class="t" style="letter-spacing:-0.351px;top:306.84px;font-size:12px;color:#1e1e1e;left:1211.7px;">$34.00</span>
<span class="t" style="letter-spacing:-0.996px;top:306.84px;font-size:12px;color:#1e1e1e;left:1322px;">Tax</span>
<svg class="a" style="left:1349.8px;top:310.0px;" width="9.6" height="6" viewBox="0 0 10 6" preserveAspectRatio="none"><path d="M0 0h10L5 6z" fill="#c2c2c2"/></svg>
<span class="t" style="letter-spacing:-0.425px;top:304.73px;font-size:14.5px;color:#0a5a96;left:1382.5px;-webkit-text-stroke:0.3px #0a5a96;">Edit</span>
<svg class="a" style="left:1428px;top:301.5px;" width="20" height="20" viewBox="0 0 20 20" preserveAspectRatio="none"><circle cx="10" cy="10" r="10" fill="#3bab4c"/><path d="M4.800 10.300l3.500 3.500 6.900-7" fill="none" stroke="#fff" stroke-width="2.200"/></svg>
<span class="t" style="letter-spacing:-0.34px;top:305.84px;font-size:12px;color:#6a6a6a;left:1467.5px;">Not Reserved</span>
<div class="a" style="left:1620.5px;top:311.5px;width:7px;height:350px;background:#dadada;"></div>
<svg class="a" style="left:1620px;top:301px;" width="8" height="5" viewBox="0 0 8 5" preserveAspectRatio="none"><path d="M.500 4.500l3.500-3.500 3.500 3.500" fill="none" stroke="#dedede" stroke-width="1.200"/></svg>
<svg class="a" style="left:1620px;top:901px;" width="8" height="5" viewBox="0 0 8 5" preserveAspectRatio="none"><path d="M.500 .500l3.500 3.500 3.500-3.500" fill="none" stroke="#dedede" stroke-width="1.200"/></svg>
<svg class="a" style="left:421px;top:914.5px;" width="5" height="8" viewBox="0 0 5 8" preserveAspectRatio="none"><path d="M4.500 .500L1 4l3.500 3.500" fill="none" stroke="#e6e6e6" stroke-width="1.200"/></svg>
<svg class="a" style="left:1607px;top:914.5px;" width="5" height="8" viewBox="0 0 5 8" preserveAspectRatio="none"><path d="M.500 .500L4 4 .500 7.500" fill="none" stroke="#e6e6e6" stroke-width="1.200"/></svg>
<div class="a" style="left:419px;top:938.5px;width:20px;height:8px;background:#e6e6e6;border-radius:4px;"></div>
<div class="a" style="left:415px;top:936.5px;width:12px;height:12px;background:#c3c3c3;border-radius:6px;"></div>
<div class="a" style="left:419px;top:961.5px;width:20px;height:8px;background:#e6e6e6;border-radius:4px;"></div>
<div class="a" style="left:415px;top:959.5px;width:12px;height:12px;background:#c3c3c3;border-radius:6px;"></div>
<span class="t" style="letter-spacing:-0.248px;top:936.84px;font-size:12px;color:#1e1e1e;left:449.3px;">Estimate</span>
<span class="t" style="letter-spacing:-0.169px;top:959.84px;font-size:12px;color:#1e1e1e;left:449.3px;">Require customer signature</span>
<div class="a" style="left:1380px;top:943px;width:116.6px;height:25px;background:#f4f4f4;border-radius:2px;"></div>
<span class="t" style="letter-spacing:-0.896px;top:949.84px;font-size:12px;color:#555;left:1409.5px;">NYS</span>
<svg class="a" style="left:1482.4px;top:953.5px;" width="9.6" height="6" viewBox="0 0 10 6" preserveAspectRatio="none"><path d="M0 0h10L5 6z" fill="#c9c9c9"/></svg>
<span class="t" style="letter-spacing:-0.826px;top:949.84px;font-size:12px;color:#1e1e1e;left:1500.4px;">(8.875 %)</span>
<span class="t" style="letter-spacing:-0.115px;top:949.84px;font-size:12px;color:#1e1e1e;left:1562.5px;">Discount:</span>
<span class="t" style="letter-spacing:-0.772px;top:949.84px;font-size:12px;color:#0a5a96;left:1615px;">0%</span>
<div class="a" style="left:407px;top:982px;width:1233px;height:1px;background:#e2e2e2;"></div>
<div class="a" style="left:425px;top:999px;width:137px;height:25px;background:#c9c9c9;"></div>
<span class="t" style="letter-spacing:-0.932px;top:1005.84px;font-size:12px;color:#fff;left:460.2px;">VOID ORDER</span>
<div class="a" style="left:563px;top:999px;width:22px;height:25px;background:#005a96;"></div>
<svg class="a" style="left:570.5px;top:1010.0px;" width="7" height="4" viewBox="0 0 10 6" preserveAspectRatio="none"><path d="M0 0h10L5 6z" fill="#fff"/></svg>
<div class="a" style="left:1217px;top:999px;width:75px;height:25px;background:#eeeeee;"></div>
<span class="t" style="letter-spacing:-0.731px;top:1005.84px;font-size:12px;color:#0a5a96;left:1232.3px;">CANCEL</span>
<div class="a" style="left:1302px;top:999px;width:137px;height:25px;background:#005a96;"></div>
<span class="t" style="letter-spacing:-0.997px;top:1005.84px;font-size:12px;color:#fff;left:1339px;">SAVE DRAFT</span>
<div class="a" style="left:1440.3px;top:999px;width:21.7px;height:25px;background:#005a96;"></div>
<svg class="a" style="left:1447.5px;top:1010.0px;" width="7" height="4" viewBox="0 0 10 6" preserveAspectRatio="none"><path d="M0 0h10L5 6z" fill="#fff"/></svg>
<div class="a" style="left:1472px;top:999px;width:136.7px;height:25px;background:#005a96;"></div>
<span class="t" style="letter-spacing:-0.935px;top:1005.84px;font-size:12px;color:#fff;left:1495px;">SAVE &amp; PROCESS</span>
<div class="a" style="left:1610px;top:999px;width:22px;height:25px;background:#005a96;"></div>
<svg class="a" style="left:1617.5px;top:1010.0px;" width="7" height="4" viewBox="0 0 10 6" preserveAspectRatio="none"><path d="M0 0h10L5 6z" fill="#fff"/></svg>
</main>
<aside aria-label="Order summary">
<div class="a" style="left:1641px;top:158px;width:279px;height:882px;background:#ffffff;"></div>
<svg class="a" style="left:1651.5px;top:130px;" width="19" height="19" viewBox="0 0 24 24" preserveAspectRatio="none"><path fill="#0a5a96" d="M19 8l-4 4h3c0 3.310-2.690 6-6 6-1.010 0-1.970-.250-2.800-.700l-1.460 1.460C8.970 19.540 10.430 20 12 20c4.420 0 8-3.580 8-8h3l-4-4zM6 12c0-3.310 2.690-6 6-6 1.010 0 1.970.250 2.800.700l1.460-1.460C15.030 4.460 13.570 4 12 4c-4.420 0-8 3.580-8 8H1l4 4 4-4H6z"/></svg>
<svg class="a" style="left:1684px;top:128px;transform:rotate(45deg);" width="23" height="23" viewBox="0 0 24 24" preserveAspectRatio="none"><path fill="#0a5a96" d="M16.500 6v11.500c0 2.210-1.790 4-4 4s-4-1.790-4-4V5c0-1.380 1.120-2.500 2.500-2.500s2.500 1.120 2.500 2.500v10.500c0 .550-.450 1-1 1s-1-.450-1-1V6H10v9.500c0 1.380 1.120 2.500 2.500 2.500s2.500-1.120 2.500-2.500V5c0-2.210-1.790-4-4-4S7 2.790 7 5v12.500c0 3.040 2.460 5.500 5.500 5.500s5.500-2.460 5.500-5.500V6h-1.500z"/></svg>
<span class="t" style="top:132.53px;font-size:10px;color:#e02020;left:1709px;">0</span>
<svg class="a" style="left:1728px;top:130px;" width="18" height="18" viewBox="0 0 18 18" preserveAspectRatio="none"><path d="M5.500 1H2.500C1.700 1 1 1.700 1 2.500v13c0 .800.700 1.500 1.500 1.500h13c.800 0 1.500-.700 1.500-1.500v-13c0-.800-.700-1.500-1.500-1.500h-3" fill="none" stroke="#0a5a96" stroke-width="1.800"/><path d="M9 1v11M4.800 8.200L9 12.400l4.200-4.200" fill="none" stroke="#0a5a96" stroke-width="1.900"/></svg>
<svg class="a" style="left:1761.5px;top:129.5px;" width="19" height="20" viewBox="0 0 24 24" preserveAspectRatio="none"><path d="M16 1H4c-1.100 0-2 .900-2 2v14h2V3h12V1z" fill="#d6d6d6"/><path d="M8 6h6.600L20 11.400V21c0 .600-.400 1-1 1H8c-.600 0-1-.400-1-1V7c0-.600.400-1 1-1z" fill="#f4f4f4" stroke="#d6d6d6" stroke-width="1.600"/></svg>
<svg class="a" style="left:1794px;top:128px;" width="22" height="22" viewBox="0 0 24 24" preserveAspectRatio="none"><path fill="#0a5a96" d="M19 8H5c-1.660 0-3 1.340-3 3v6h4v4h12v-4h4v-6c0-1.660-1.340-3-3-3zm-3 11H8v-5h8v5zm3-7c-.550 0-1-.450-1-1s.450-1 1-1 1 .450 1 1-.450 1-1 1zm-1-9H6v4h12V3z"/></svg>
<svg class="a" style="left:1837.5px;top:127.5px;" width="23" height="23" viewBox="0 0 24 24" preserveAspectRatio="none"><path fill="#0a5a96" d="M20 4H4c-1.100 0-1.990.900-1.990 2L2 18c0 1.100.900 2 2 2h16c1.100 0 2-.900 2-2V6c0-1.100-.900-2-2-2zm0 4l-8 5-8-5V6l8 5 8-5v2z"/></svg>
<svg class="a" style="left:1882px;top:129px;" width="22" height="22" viewBox="0 0 24 24" preserveAspectRatio="none"><path fill="#0a5a96" d="M14 2H6c-1.100 0-1.990.900-1.990 2L4 20c0 1.100.890 2 1.990 2H18c1.100 0 2-.900 2-2V8l-6-6zm2 16H8v-2h8v2zm0-4H8v-2h8v2zm-3-5V3.500L18.500 9H13z"/></svg>
<svg class="a" style="left:1818.0px;top:137.5px;" width="7" height="4" viewBox="0 0 7 4" preserveAspectRatio="none"><path d="M0 0h7L3.500 4z" fill="#0a5a96"/></svg>
<svg class="a" style="left:1862.0px;top:137.5px;" width="7" height="4" viewBox="0 0 7 4" preserveAspectRatio="none"><path d="M0 0h7L3.500 4z" fill="#0a5a96"/></svg>
<svg class="a" style="left:1906.0px;top:137.5px;" width="7" height="4" viewBox="0 0 7 4" preserveAspectRatio="none"><path d="M0 0h7L3.500 4z" fill="#0a5a96"/></svg>
<span class="t" style="letter-spacing:-1.287px;top:170.0px;font-size:13px;color:#333333;left:1653.8px;">THIS ORDER</span>
<span class="t" style="letter-spacing:-1.545px;top:170.0px;font-size:13px;color:#333333;left:1749px;">CUSTOMER</span>
<span class="t" style="letter-spacing:-1.781px;top:170.0px;font-size:13px;color:#333333;left:1858.3px;">LOGS</span>
<div class="a" style="left:1641px;top:195px;width:279px;height:1px;background:#e6e6e6;"></div>
<div class="a" style="left:1733.8px;top:193.7px;width:92.2px;height:2.2px;background:#0a5a96;"></div>
<span class="t" style="letter-spacing:-0.246px;top:207.0px;font-size:13px;color:#222;left:1657px;">SUMMARY</span>
<span class="t" style="letter-spacing:0.124px;top:237.19px;font-size:11px;color:#6a6a6a;left:1657px;">Credit Limit:</span>
<span class="t" style="letter-spacing:-0.143px;top:237.19px;font-size:11px;color:#333;right:17px;">$600,000.00</span>
<span class="t" style="letter-spacing:0.135px;top:252.19px;font-size:11px;color:#6a6a6a;left:1657px;">Available Credit:</span>
<span class="t" style="letter-spacing:-0.143px;top:252.19px;font-size:11px;color:#333;right:17px;">$600,000.00</span>
<span class="t" style="letter-spacing:0.145px;top:267.19px;font-size:11px;color:#6a6a6a;left:1657px;">Open Invoices:</span>
<span class="t" style="letter-spacing:-0.106px;top:267.19px;font-size:11px;color:#333;right:17px;">$0.00</span>
<span class="t" style="letter-spacing:0.128px;top:282.19px;font-size:11px;color:#6a6a6a;left:1657px;">Credit:</span>
<span class="t" style="letter-spacing:-0.106px;top:282.19px;font-size:11px;color:#333;right:17px;">$0.00</span>
<span class="t" style="letter-spacing:0.182px;top:297.19px;font-size:11px;color:#6a6a6a;left:1657px;">Deposits:</span>
<span class="t" style="letter-spacing:-0.106px;top:297.19px;font-size:11px;color:#333;right:17px;">$0.00</span>
<span class="t" style="letter-spacing:0.017px;top:312.19px;font-size:11px;color:#6a6a6a;left:1657px;">Open Balance:</span>
<span class="t" style="letter-spacing:-0.106px;top:312.19px;font-size:11px;color:#333;right:17px;">$0.00</span>
<span class="t" style="letter-spacing:0.093px;top:327.19px;font-size:11px;color:#6a6a6a;left:1657px;">Open Sale Orders:</span>
<span class="t" style="top:327.19px;font-size:11px;color:#333;right:17px;">0</span>
<span class="t" style="letter-spacing:0.087px;top:342.19px;font-size:11px;color:#6a6a6a;left:1657px;">Phone:</span>
<span class="t" style="letter-spacing:-0.21px;top:357.19px;font-size:11px;color:#6a6a6a;left:1657px;">Email:</span>
<span class="t" style="letter-spacing:0.23px;top:372.19px;font-size:11px;color:#6a6a6a;left:1657px;">Card on file:</span>
<div class="a" style="left:1641px;top:389.5px;width:279px;height:2px;background:#ececec;"></div>
<span class="t" style="letter-spacing:-0.631px;top:403.0px;font-size:13px;color:#222;left:1657px;">RECENT TRANSACTION</span>
<span class="t" style="letter-spacing:-0.14px;top:439.84px;font-size:12px;color:#1a1a1a;font-weight:700;left:1657.5px;">Sale Order</span>
<span class="t" style="letter-spacing:-0.202px;top:471.34px;font-size:12px;color:#1a1a1a;font-weight:700;left:1657.5px;">Ship Order</span>
<svg class="a" style="left:1887px;top:440.0px;" width="6" height="11" viewBox="0 0 6 11" preserveAspectRatio="none"><path d="M.700 .700L5.200 5.500.700 10.300" fill="none" stroke="#8a8a8a" stroke-width="1.400"/></svg>
<svg class="a" style="left:1887px;top:471.0px;" width="6" height="11" viewBox="0 0 6 11" preserveAspectRatio="none"><path d="M.700 .700L5.200 5.500.700 10.300" fill="none" stroke="#8a8a8a" stroke-width="1.400"/></svg>
<div class="a" style="left:1657px;top:460.5px;width:246px;height:2px;background:#ececec;"></div>
<div class="a" style="left:1657px;top:491.5px;width:246px;height:2px;background:#ececec;"></div>
<div class="a" style="left:1641px;top:787.5px;width:279px;height:2px;background:#ececec;"></div>
<div class="a" style="left:1657px;top:801px;width:79.7px;height:26px;background:#eeeeee;border-radius:2px;"></div>
<div class="a" style="left:1740.8px;top:801px;width:77.9px;height:26px;background:#eeeeee;border-radius:2px;"></div>
<div class="a" style="left:1823px;top:801px;width:78px;height:26px;background:#eeeeee;border-radius:2px;"></div>
<span class="t" style="letter-spacing:-0.879px;top:808.84px;font-size:12px;color:#0a5a96;left:1681.2px;">CARD</span>
<span class="t" style="letter-spacing:-0.863px;top:808.84px;font-size:12px;color:#0a5a96;left:1761.3px;">CHECK</span>
<span class="t" style="letter-spacing:-0.761px;top:808.84px;font-size:12px;color:#0a5a96;left:1853.3px;">CASH</span>
<svg class="a" style="left:1839px;top:810px;" width="10.5" height="8.5" viewBox="0 0 10.500 8.500" preserveAspectRatio="none"><path d="M.800 4.600l3 3L9.700 .900" fill="none" stroke="#0a5a96" stroke-width="1.700"/></svg>
<div class="a" style="left:1645px;top:839px;width:270px;height:1px;background:#e8e8e8;"></div>
<span class="t" style="letter-spacing:-0.336px;top:849.84px;font-size:12px;color:#1a1a1a;font-weight:700;left:1649.2px;">Open Balance</span>
<span class="t" style="letter-spacing:-0.227px;top:864.84px;font-size:12px;color:#1a1a1a;left:1649.2px;">SubTotal:</span>
<span class="t" style="letter-spacing:-0.617px;top:864.84px;font-size:12px;color:#333;right:9px;">$34.00</span>
<span class="t" style="letter-spacing:-0.059px;top:879.84px;font-size:12px;color:#1a1a1a;left:1649.2px;">Discount:</span>
<span class="t" style="letter-spacing:-0.68px;top:879.84px;font-size:12px;color:#333;right:9px;">$0</span>
<span class="t" style="letter-spacing:-0.629px;top:894.84px;font-size:12px;color:#1a1a1a;left:1649.2px;">Tax:</span>
<span class="t" style="letter-spacing:-0.606px;top:894.84px;font-size:12px;color:#333;right:9px;">$0.00</span>
<span class="t" style="letter-spacing:-0.297px;top:909.84px;font-size:12px;color:#1a1a1a;font-weight:700;left:1649.2px;">Total:</span>
<span class="t" style="letter-spacing:0.133px;top:909.84px;font-size:12px;color:#1a1a1a;font-weight:700;right:9px;">$34.00</span>
<span class="t" style="letter-spacing:-0.168px;top:924.84px;font-size:12px;color:#0a5a96;left:1649.2px;">Currency:</span>
<div class="a" style="left:1649px;top:946.5px;width:262px;height:1px;background:#e4e4e4;"></div>
<span class="t" style="letter-spacing:-0.338px;top:964.84px;font-size:12px;color:#1a1a1a;font-weight:700;left:1657px;">Payments</span>
<span class="t" style="letter-spacing:0.156px;top:964.84px;font-size:12px;color:#1a1a1a;font-weight:700;right:17px;">$27</span>
<span class="t" style="letter-spacing:-0.551px;top:979.84px;font-size:12px;color:#1a1a1a;left:1657px;">Cash 1:</span>
<span class="t" style="letter-spacing:-0.617px;top:979.84px;font-size:12px;color:#333;right:17px;">$27.00</span>
<span class="t" style="letter-spacing:-0.261px;top:994.84px;font-size:12px;color:#1a1a1a;font-weight:700;left:1657px;">Total Applied:</span>
<span class="t" style="letter-spacing:0.133px;top:994.84px;font-size:12px;color:#1a1a1a;font-weight:700;right:17px;">$27.00</span>
<span class="t" style="letter-spacing:-0.121px;top:1009.84px;font-size:12px;color:#1a1a1a;font-weight:700;left:1657px;">Amount Due:</span>
<span class="t" style="letter-spacing:0.094px;top:1009.84px;font-size:12px;color:#ff0000;font-weight:700;right:17px;">$7.00</span>
<div class="a" style="left:1641px;top:1037px;width:279px;height:3px;background:#f0f0f0;"></div>
</aside>
<section aria-label="PDF viewer window">
<div class="a" style="left:513px;top:339px;width:910px;height:642px;background:#f7f7f7;box-shadow:0 5px 18px 1px rgba(0,0,0,.30),0 0 0 1px rgba(80,80,80,.8);"></div>
<div class="a" style="left:513px;top:339px;width:910px;height:40px;background:#cdcdcd;"></div>
<div class="a" style="left:560px;top:347px;width:240px;height:32px;background:#f7f7f7;border-radius:7px 7px 0 0;"></div>
<svg class="a" style="left:553px;top:372px;" width="7" height="7" viewBox="0 0 7 7" preserveAspectRatio="none"><path d="M7 0v7H0A7 7 0 0 0 7 0z" fill="#f7f7f7"/></svg>
<svg class="a" style="left:800px;top:372px;" width="7" height="7" viewBox="0 0 7 7" preserveAspectRatio="none"><path d="M0 0v7h7A7 7 0 0 1 0 0z" fill="#f7f7f7"/></svg>
<svg class="a" style="left:529.5px;top:355.5px;" width="14" height="14" viewBox="0 0 14 14" preserveAspectRatio="none"><rect x=".900" y="1.500" width="12.200" height="11.600" rx="2.300" fill="none" stroke="#1a1a1a" stroke-width="1.300"/><path d="M1 4.300h12" stroke="#1a1a1a" stroke-width="1.300"/><path d="M.900 3.500v7.500c0 1.200.900 2.100 2.100 2.100h1V3.500z" fill="#1a1a1a"/><path d="M10.500 6v2.500H6.500M8 7l-1.600 1.500L8 10" fill="none" stroke="#1a1a1a" stroke-width="1.100"/></svg>
<svg class="a" style="left:571px;top:354.5px;" width="15" height="17" viewBox="0 0 15 17" preserveAspectRatio="none"><path d="M2 .700h7.500l4 4v11.600H2z" fill="#fff" stroke="#2a2a2a" stroke-width="1.200"/><path d="M9.500 .700v4h4" fill="none" stroke="#2a2a2a" stroke-width="1.200"/><rect x="0" y="6.300" width="15" height="6.400" rx="1" fill="#ef3b3b"/><text x="7.500" y="11.500" text-anchor="middle" font-family="Liberation Sans" font-size="5.400" font-weight="700" fill="#fff">PDF</text></svg>
<span class="t" style="letter-spacing:-0.301px;top:356.84px;font-size:12px;color:#2a2a2a;left:597px;">SaleOrder_SO-0037818-D_from_</span>
<div class="a" style="left:756px;top:350px;width:14px;height:26px;background:linear-gradient(90deg,rgba(247,247,247,0),#f7f7f7);"></div>
<svg class="a" style="left:778.5px;top:358.5px;" width="9" height="9" viewBox="0 0 9 9" preserveAspectRatio="none"><path d="M.700 .700l7.600 7.600M8.300 .700L.700 8.300" stroke="#1a1a1a" stroke-width="1.400"/></svg>
<svg class="a" style="left:810.5px;top:355.5px;" width="13" height="13" viewBox="0 0 13 13" preserveAspectRatio="none"><path d="M6.500 0v13M0 6.500h13" stroke="#1a1a1a" stroke-width="1.200"/></svg>
<div class="a" style="left:1302px;top:353px;width:10px;height:1px;background:#1a1a1a;"></div>
<div class="a" style="left:1349px;top:348px;width:10px;height:10px;border:1px solid #1a1a1a;"></div>
<svg class="a" style="left:1394.5px;top:347.5px;" width="11" height="11" viewBox="0 0 11 11" preserveAspectRatio="none"><path d="M.500 .500l10 10M10.500 .500l-10 10" stroke="#1a1a1a" stroke-width="1.100"/></svg>
<div class="a" style="left:513px;top:379px;width:910px;height:39px;background:#f7f7f7;"></div>
<div class="a" style="left:513px;top:417px;width:910px;height:1px;background:#dedede;"></div>
<svg class="a" style="left:533px;top:391px;" width="16" height="14" viewBox="0 0 16 14" preserveAspectRatio="none"><path d="M16 7H1.200M7.300 .700L1 7l6.300 6.300" fill="none" stroke="#c9c9c9" stroke-width="1.300"/></svg>
<svg class="a" style="left:577px;top:391px;" width="16" height="14" viewBox="0 0 16 14" preserveAspectRatio="none"><path d="M0 7h14.800M8.700 .700L15 7l-6.300 6.300" fill="none" stroke="#c9c9c9" stroke-width="1.300"/></svg>
<svg class="a" style="left:620.5px;top:389.5px;" width="17" height="17" viewBox="0 0 17 17" preserveAspectRatio="none"><path d="M15.300 8.500a6.800 6.800 0 1 1-2.300-5.100" fill="none" stroke="#1a1a1a" stroke-width="1.300"/><path d="M13.600 .200v3.900H9.700" fill="none" stroke="#1a1a1a" stroke-width="1.300"/></svg>
<div class="a" style="left:657px;top:383px;width:573px;height:30px;background:#ffffff;border-radius:5px;"></div>
<svg class="a" style="left:671.5px;top:390.5px;" width="15" height="15" viewBox="0 0 15 15" preserveAspectRatio="none"><circle cx="7.500" cy="7.500" r="6.800" fill="none" stroke="#7a7a7a" stroke-width="1"/><path d="M7.500 6.500v4.700" stroke="#7a7a7a" stroke-width="1.200"/><circle cx="7.500" cy="4.400" r=".800" fill="#7a7a7a"/></svg>
<span class="t" style="letter-spacing:-0.168px;top:390.8px;font-size:15px;color:#6a6a6a;left:695px;">File</span>
<div class="a" style="left:730px;top:390px;width:1px;height:16px;background:#b8b8b8;"></div>
<span class="t" style="letter-spacing:0.232px;top:390.8px;font-size:15px;color:#1a1a1a;left:743.3px;">C:/Users/Karina_Shchitova/Downloads/SaleOrder_SO-003781...</span>
<svg class="a" style="left:1203px;top:390px;" width="16" height="16" viewBox="0 0 16 16" preserveAspectRatio="none"><path d="M8 1.200l2.100 4.300 4.700.700-3.400 3.300.800 4.700L8 12l-4.200 2.200.800-4.700L1.200 6.200l4.700-.700z" fill="none" stroke="#4a4a4a" stroke-width="1.100" stroke-linejoin="round"/><circle cx="12.600" cy="12.400" r="4.300" fill="#707070" stroke="#fff" stroke-width=".900"/><path d="M12.600 10.100v4.600M10.300 12.400h4.600" stroke="#fff" stroke-width="1.200"/></svg>
<svg class="a" style="left:1250px;top:390px;" width="18" height="16" viewBox="0 0 18 16" preserveAspectRatio="none"><path d="M7.500 1.200l2 4.100 4.500.700-1.600 1.500M11 14.300L7.500 12.500l-4 2.100.800-4.500L1 6.900l4.500-.700 2-4.100" fill="none" stroke="#1a1a1a" stroke-width="1.200" stroke-linejoin="round"/><path d="M11 5.800h6.200M11 8.500h6.200M11 11.200h6.200" stroke="#1a1a1a" stroke-width="1.200"/></svg>
<svg class="a" style="left:1293.7px;top:388.5px;" width="17.5" height="17.5" viewBox="0 0 18 18" preserveAspectRatio="none"><rect x="5.500" y="5.500" width="11.500" height="11.500" rx="2.800" fill="#f7f7f7" stroke="#1a1a1a" stroke-width="1.200"/><path d="M11.200 8.500v5.600M8.400 11.300H14" stroke="#1a1a1a" stroke-width="1.200"/><path d="M3.200 11.800L1.300 5.100c-.300-1.200.300-2.300 1.500-2.600L9.300.800c1.100-.300 2.200.300 2.600 1.300l.400 1.300" fill="none" stroke="#1a1a1a" stroke-width="1.200"/></svg>
<svg class="a" style="left:1338px;top:387px;" width="22" height="22" viewBox="0 0 22 22" preserveAspectRatio="none"><circle cx="11" cy="11" r="11" fill="#d4d4d4"/><circle cx="11" cy="8.300" r="3.700" fill="#8f8f8f"/><path d="M3.900 17.800c1-3.300 3.800-4.600 7.100-4.600s6.100 1.300 7.100 4.600A10.600 10.600 0 0 1 11 21.200a10.600 10.600 0 0 1-7.100-3.400z" fill="#8f8f8f"/></svg>
<div class="a" style="left:1387.2px;top:396.7px;width:2.8px;height:2.8px;background:#111;border-radius:1.4px;"></div>
<div class="a" style="left:1392.7px;top:396.7px;width:2.8px;height:2.8px;background:#111;border-radius:1.4px;"></div>
<div class="a" style="left:1398.2px;top:396.7px;width:2.8px;height:2.8px;background:#111;border-radius:1.4px;"></div>
<div class="a" style="left:513px;top:418px;width:893px;height:41px;background:#f7f7f7;"></div>
<div class="a" style="left:513px;top:458px;width:893px;height:1px;background:#cfcfcf;"></div>
<div class="a" style="left:517px;top:422px;width:40px;height:31.5px;background:#fbfbfb;border:1px solid #c6c6c6;border-radius:2px;"></div>
<span class="t" style="top:432.84px;font-size:12px;color:#3a3a3a;left:536.5px;transform:translateX(-50%);">1</span>
<span class="t" style="top:432.84px;font-size:12px;color:#3a3a3a;left:567px;">of 1</span>
<svg class="a" style="left:608px;top:431px;" width="15" height="15" viewBox="0 0 15 15" preserveAspectRatio="none"><circle cx="5.800" cy="5.800" r="5" fill="none" stroke="#1a1a1a" stroke-width="1.200"/><path d="M9.400 9.400l5 5" stroke="#1a1a1a" stroke-width="1.300"/></svg>
<div class="a" style="left:794px;top:437.5px;width:14px;height:1.2px;background:#1a1a1a;"></div>
<svg class="a" style="left:834px;top:431px;" width="14" height="14" viewBox="0 0 14 14" preserveAspectRatio="none"><path d="M7 0v14M0 7h14" stroke="#1a1a1a" stroke-width="1.200"/></svg>
<svg class="a" style="left:872.5px;top:429.5px;" width="17" height="18" viewBox="0 0 17 18" preserveAspectRatio="none"><path d="M1.300 8.500a7.200 7.200 0 1 1 10.300 6.800" fill="none" stroke="#1a1a1a" stroke-width="1.200"/><path d="M14.500 15.800h-3.600v-3.600" fill="none" stroke="#1a1a1a" stroke-width="1.200"/><circle cx="8.500" cy="8.700" r="1.500" fill="none" stroke="#1a1a1a" stroke-width="1.100"/></svg>
<svg class="a" style="left:913px;top:432px;" width="17" height="12" viewBox="0 0 17 12" preserveAspectRatio="none"><rect x=".600" y=".600" width="15.800" height="10.800" rx="2.200" fill="none" stroke="#1a1a1a" stroke-width="1.200"/><path d="M3.500 6h10M5.300 4.200L3.500 6l1.800 1.800M11.700 4.200L13.500 6l-1.800 1.800" fill="none" stroke="#1a1a1a" stroke-width="1.100"/></svg>
<div class="a" style="left:945px;top:430px;width:1px;height:16px;background:#cfcfcf;"></div>
<div class="a" style="left:994.5px;top:430px;width:1px;height:16px;background:#cfcfcf;"></div>
<div class="a" style="left:1043px;top:430px;width:1px;height:16px;background:#cfcfcf;"></div>
<div class="a" style="left:1228px;top:430px;width:1px;height:16px;background:#cfcfcf;"></div>
<div class="a" style="left:1357px;top:430px;width:1px;height:16px;background:#cfcfcf;"></div>
<svg class="a" style="left:962px;top:431px;" width="17" height="14" viewBox="0 0 17 14" preserveAspectRatio="none"><path d="M7 .600H2.500C1.400.600.600 1.400.600 2.500v9c0 1.100.800 1.900 1.900 1.900H7" fill="none" stroke="#c4c4c4" stroke-width="1.100" stroke-dasharray="2 1.300"/><path d="M8.300.600h4.200l3.900 3.900v7c0 1.100-.800 1.900-1.900 1.900H8.300zM12.500.600v3.900h3.900" fill="none" stroke="#c4c4c4" stroke-width="1.100"/></svg>
<span class="t" style="top:431.3px;font-size:15px;color:#2a2a2a;left:1012px;">A</span>
<svg class="a" style="left:1020.5px;top:430px;" width="8" height="9" viewBox="0 0 8 9" preserveAspectRatio="none"><path d="M.800 3.300a3.400 3.400 0 0 1 3 3.200M1 .700a6.200 6.200 0 0 1 5.800 5.400" fill="none" stroke="#1a1a1a" stroke-width="1"/></svg>
<svg class="a" style="left:1060.5px;top:430px;" width="15.5" height="16" viewBox="0 0 15.500 16" preserveAspectRatio="none"><path d="M.600 0v2.800h14.300V0M1.600 2.800L7.750 14.200 13.900 2.800" fill="none" stroke="#1a1a1a" stroke-width="1.200" stroke-linejoin="round"/><path d="M6.700 13h2.100v2.600H6.700z" fill="#1a1a1a"/></svg>
<svg class="a" style="left:1097.5px;top:436.5px;" width="7" height="4" viewBox="0 0 7 4" preserveAspectRatio="none"><path d="M.500 .500l3 3 3-3" fill="none" stroke="#4a4a4a" stroke-width="1"/></svg>
<svg class="a" style="left:1128.5px;top:430px;" width="14.5" height="16" viewBox="0 0 14.500 16" preserveAspectRatio="none"><path d="M.600 0v6h13.300V0M3.200 6v9l8.200-3V6" fill="none" stroke="#1a1a1a" stroke-width="1.200" stroke-linejoin="round"/></svg>
<svg class="a" style="left:1165.5px;top:436.5px;" width="7" height="4" viewBox="0 0 7 4" preserveAspectRatio="none"><path d="M.500 .500l3 3 3-3" fill="none" stroke="#4a4a4a" stroke-width="1"/></svg>
<svg class="a" style="left:1196px;top:430px;" width="17" height="15" viewBox="0 0 17 15" preserveAspectRatio="none"><path d="M9.300 1.200l6 6-6.500 6.600H4.600L1.300 10.500c-.500-.500-.500-1.200 0-1.700z" fill="none" stroke="#1a1a1a" stroke-width="1.200" stroke-linejoin="round"/><path d="M4.300 5.800l6.200 6.200M8.800 13.800h6.500" fill="none" stroke="#1a1a1a" stroke-width="1.200"/></svg>
<svg class="a" style="left:1243.5px;top:430.5px;" width="17" height="15" viewBox="0 0 17 15" preserveAspectRatio="none"><rect x=".600" y="3.600" width="15.800" height="8.200" rx="2" fill="none" stroke="#1a1a1a" stroke-width="1.200"/><rect x="4" y=".600" width="9" height="3" fill="#f7f7f7" stroke="#1a1a1a" stroke-width="1.200"/><rect x="4" y="8.600" width="9" height="5.800" rx="1" fill="#f7f7f7" stroke="#1a1a1a" stroke-width="1.200"/></svg>
<svg class="a" style="left:1285px;top:431px;" width="14" height="14" viewBox="0 0 14 14" preserveAspectRatio="none"><path d="M.600 2.200c0-.900.700-1.600 1.600-1.600h8l3.200 3.200v8c0 .900-.700 1.600-1.600 1.600H2.200c-.900 0-1.600-.700-1.600-1.600z" fill="none" stroke="#c4c4c4" stroke-width="1.100"/><path d="M3.500 .600v3.600h6V.600M3 13.400V8.300h8v5.100" fill="none" stroke="#c4c4c4" stroke-width="1.100"/></svg>
<svg class="a" style="left:1324px;top:430px;" width="17" height="16" viewBox="0 0 17 16" preserveAspectRatio="none"><path d="M7 14.400H2.800c-.900 0-1.600-.700-1.600-1.600V2.800c0-.900.700-1.600 1.600-1.600h8l3.200 3.200v2.800" fill="none" stroke="#1a1a1a" stroke-width="1.200"/><path d="M4.300 1.200v3.600h6V1.200M3.800 14.400V8.800h6" fill="none" stroke="#1a1a1a" stroke-width="1.200"/><path d="M14.800 8.300l1.700 1.700-5.200 5.200-2.500.800.800-2.500z" fill="#1a1a1a"/></svg>
<div class="a" style="left:1362px;top:422px;width:40px;height:32px;background:#e8e8e8;border-radius:3px;"></div>
<svg class="a" style="left:1374px;top:430px;" width="17" height="17" viewBox="0 0 17 17" preserveAspectRatio="none"><path d="M10.200 .800l6 6-1.300 1.300-1.300-.300-2.800 2.800.200 3.400-1.500 1.500-3.600-3.600L1.300 16.500l-.800-.800 4.600-4.600L1.500 7.500 3 6l3.400.200 2.800-2.800-.300-1.300z" fill="#1a1a1a"/></svg>
<div class="a" style="left:513px;top:459px;width:893px;height:522px;background:#e6e6e6;"></div>
<div class="a" style="left:551px;top:459px;width:816px;height:522px;background:#ffffff;box-shadow:0 0 4px rgba(0,0,0,.25);"></div>
<div class="a" style="left:1406px;top:418px;width:17px;height:563px;background:#f1f1f1;"></div>
<div class="a" style="left:1408.5px;top:565.5px;width:12.5px;height:268px;background:#c1c1c1;"></div>
<svg class="a" style="left:1410.5px;top:425px;" width="8" height="5" viewBox="0 0 8 5" preserveAspectRatio="none"><path d="M0 5h8L4 0z" fill="#505050"/></svg>
<svg class="a" style="left:1410.5px;top:969px;" width="8" height="5" viewBox="0 0 8 5" preserveAspectRatio="none"><path d="M0 0h8L4 5z" fill="#505050"/></svg>
</section>
<article aria-label="Sale order PDF document">
<div class="a" style="left:551px;top:459px;width:816px;height:522px;overflow:hidden">
<span class="t" style="letter-spacing:-1.521px;top:-81.26px;font-size:96px;color:#ececec;font-weight:700;left:406px;transform:translateX(-50%);top:222px;transform:translateX(-50%) rotate(-48deg);">Estimate</span>
</div>
<div class="a" style="left:580px;top:459px;width:371.5px;height:10.5px;border:1px solid #c8c8c8;border-top:none;"></div>
<div class="a" style="left:967px;top:459px;width:371px;height:10.5px;border:1px solid #c8c8c8;border-top:none;"></div>
<div class="a" style="left:580px;top:485px;width:758px;height:61.5px;border:1px solid #c8c8c8;"></div>
<div class="a" style="left:581px;top:486px;width:756px;height:26px;background:rgba(0,0,0,.035);"></div>
<div class="a" style="left:900px;top:486px;width:1px;height:60px;background:#c8c8c8;"></div>
<span class="t" style="letter-spacing:0.121px;top:494.34px;font-size:12px;color:#111;font-weight:700;left:588.3px;">Date</span>
<span class="t" style="letter-spacing:-0.094px;top:494.34px;font-size:12px;color:#111;font-weight:700;left:908.5px;">Ship Date</span>
<span class="t" style="letter-spacing:0.044px;top:522.84px;font-size:12px;color:#222;left:588.3px;">05/07/2021</span>
<span class="t" style="letter-spacing:0.066px;top:522.84px;font-size:12px;color:#222;left:908.5px;">Today, 5/6/2021</span>
<div class="a" style="left:580px;top:563px;width:758px;height:60.5px;border:1px solid #c8c8c8;"></div>
<div class="a" style="left:581px;top:564px;width:756px;height:25.5px;background:rgba(0,0,0,.035);"></div>
<div class="a" style="left:848px;top:564px;width:1px;height:59px;background:#c8c8c8;"></div>
<span class="t" style="letter-spacing:-0.169px;top:571.84px;font-size:12px;color:#111;font-weight:700;left:588.3px;">Customer PO #</span>
<span class="t" style="letter-spacing:-0.391px;top:571.84px;font-size:12px;color:#111;font-weight:700;left:856.8px;">Rep</span>
<span class="t" style="letter-spacing:0.039px;top:599.84px;font-size:12px;color:#222;left:856.8px;">test</span>
<div class="a" style="left:580px;top:643px;width:759px;height:27px;background:#004f87;"></div>
<div class="a" style="left:612px;top:643px;width:1px;height:27px;background:#ffffff;"></div>
<div class="a" style="left:612px;top:670px;width:1px;height:35.5px;background:#c8c8c8;"></div>
<div class="a" style="left:796px;top:643px;width:1px;height:27px;background:#ffffff;"></div>
<div class="a" style="left:796px;top:670px;width:1px;height:35.5px;background:#c8c8c8;"></div>
<div class="a" style="left:1054px;top:643px;width:1px;height:27px;background:#ffffff;"></div>
<div class="a" style="left:1054px;top:670px;width:1px;height:35.5px;background:#c8c8c8;"></div>
<div class="a" style="left:1134px;top:643px;width:1px;height:27px;background:#ffffff;"></div>
<div class="a" style="left:1134px;top:670px;width:1px;height:35.5px;background:#c8c8c8;"></div>
<div class="a" style="left:1231px;top:643px;width:1px;height:27px;background:#ffffff;"></div>
<div class="a" style="left:1231px;top:670px;width:1px;height:35.5px;background:#c8c8c8;"></div>
<div class="a" style="left:580px;top:670px;width:1px;height:35.5px;background:#c8c8c8;"></div>
<div class="a" style="left:1338px;top:670px;width:1px;height:35.5px;background:#c8c8c8;"></div>
<div class="a" style="left:580px;top:705px;width:759px;height:1px;background:#c8c8c8;"></div>
<span class="t" style="top:651.84px;font-size:12px;color:#ffffff;font-weight:700;left:592.4px;">#</span>
<span class="t" style="letter-spacing:0.328px;top:651.84px;font-size:12px;color:#ffffff;font-weight:700;left:621px;">Item</span>
<span class="t" style="letter-spacing:-0.138px;top:651.84px;font-size:12px;color:#ffffff;font-weight:700;left:805px;">Description</span>
<span class="t" style="letter-spacing:-0.005px;top:651.84px;font-size:12px;color:#ffffff;font-weight:700;left:1094.5px;transform:translateX(-50%);">Qty</span>
<span class="t" style="letter-spacing:-0.129px;top:651.84px;font-size:12px;color:#ffffff;font-weight:700;left:1183px;transform:translateX(-50%);">Rate</span>
<span class="t" style="letter-spacing:0.112px;top:651.84px;font-size:12px;color:#ffffff;font-weight:700;left:1285px;transform:translateX(-50%);">Amount</span>
<span class="t" style="top:682.84px;font-size:12px;color:#222;left:593.8px;">1</span>
<span class="t" style="letter-spacing:-0.43px;top:680.84px;font-size:12px;color:#222;left:621px;">01</span>
<span class="t" style="letter-spacing:-0.234px;top:682.84px;font-size:12px;color:#222;left:805px;">11</span>
<span class="t" style="top:680.84px;font-size:12px;color:#222;right:794px;">1</span>
<span class="t" style="letter-spacing:-0.284px;top:680.84px;font-size:12px;color:#222;right:697px;">$34.00</span>
<span class="t" style="letter-spacing:-0.284px;top:680.84px;font-size:12px;color:#222;right:590.4000000000001px;">$34.00</span>
<span class="t" style="letter-spacing:-0.152px;top:726.84px;font-size:12px;color:#000;font-weight:700;right:705.5px;">TOTAL (USD):</span>
<span class="t" style="letter-spacing:0.133px;top:726.84px;font-size:12px;color:#000;font-weight:700;right:582.3px;">$34.00</span>
<span class="t" style="letter-spacing:-0.042px;top:747.84px;font-size:12px;color:#000;font-weight:700;right:705.5px;">Amount Paid:</span>
<span class="t" style="letter-spacing:0.133px;top:747.84px;font-size:12px;color:#000;font-weight:700;right:582.3px;">$27.00</span>
<span class="t" style="letter-spacing:-0.408px;top:768.84px;font-size:12px;color:#000;font-weight:700;right:705.5px;">Cash 1:</span>
<span class="t" style="letter-spacing:0.133px;top:768.84px;font-size:12px;color:#000;font-weight:700;right:582.3px;">$27.00</span>
<span class="t" style="letter-spacing:-0.294px;top:789.84px;font-size:12px;color:#000;font-weight:700;right:705.5px;">Balance Due:</span>
<span class="t" style="letter-spacing:0.094px;top:789.84px;font-size:12px;color:#000;font-weight:700;right:582.3px;">$7.00</span>
<span class="t" style="letter-spacing:-0.14px;top:820.84px;font-size:12px;color:#222;font-weight:700;left:580px;">Terms and Conditions</span>
<span class="t" style="letter-spacing:-0.046px;top:838.84px;font-size:12px;color:#444;left:580px;">This is contract only - void after 30 days</span>
<div class="a" style="left:1077px;top:698px;width:311.2px;height:138px;border:4.2px solid #ff5a4b;box-shadow:2px 2px 2.500px rgba(0,0,0,.8), inset 2px 2px 2.500px rgba(0,0,0,.8);"></div>
<div class="a" style="left:1640px;top:824.4px;width:279px;height:208.4px;border:4.2px solid #ff5a4b;box-shadow:2px 2px 2.500px rgba(0,0,0,.8), inset 2px 2px 2.500px rgba(0,0,0,.8);"></div>
</article>
</body></html>
